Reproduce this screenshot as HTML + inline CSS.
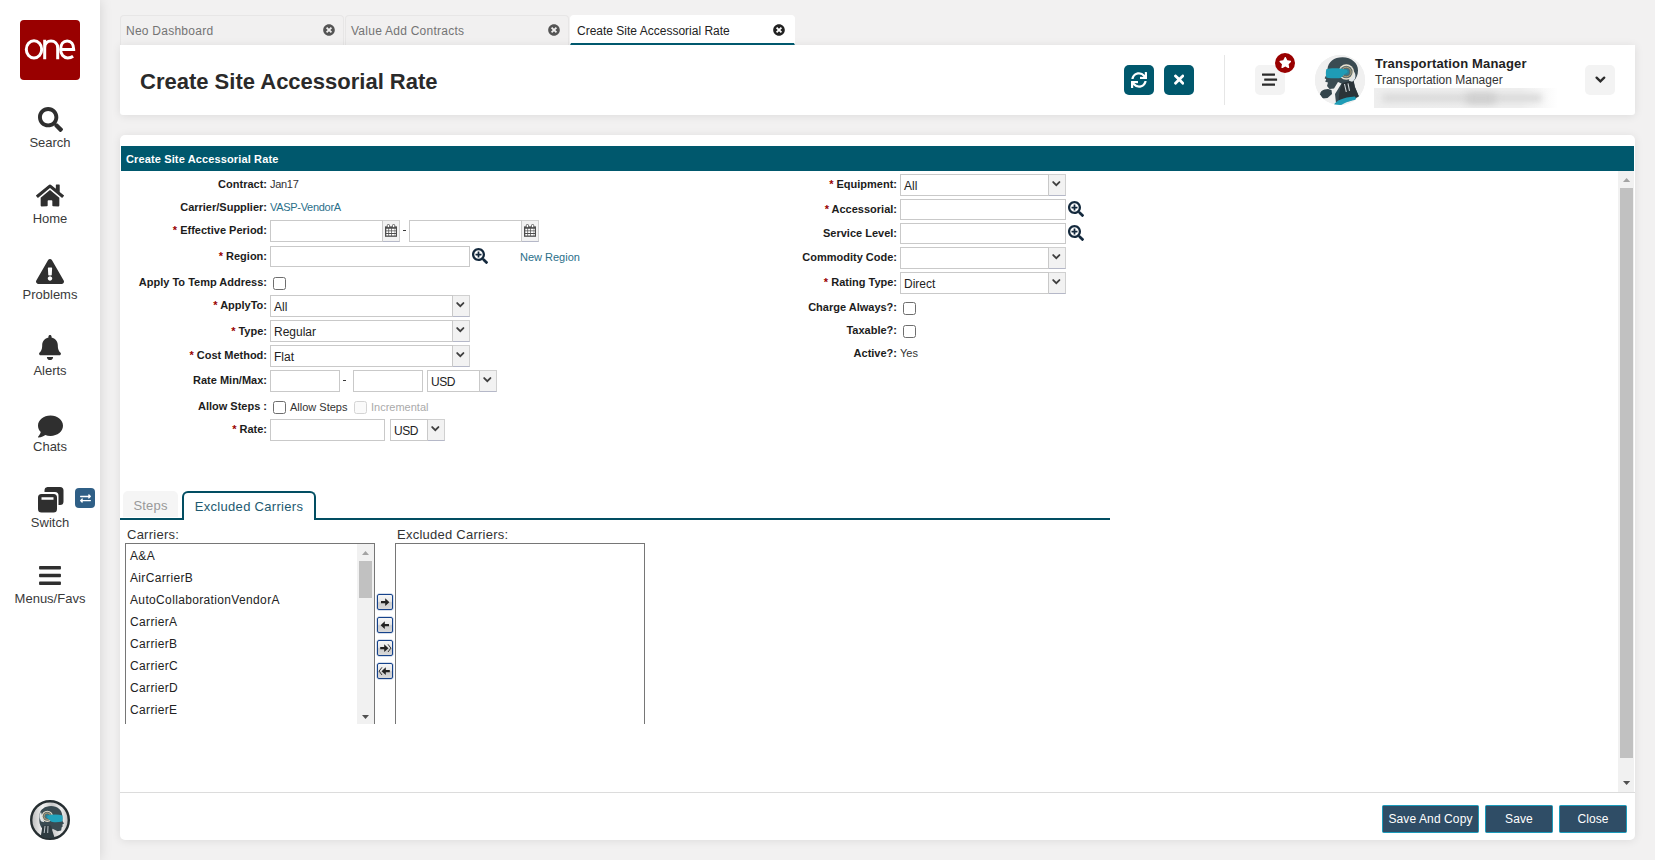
<!DOCTYPE html>
<html><head><meta charset="utf-8">
<style>
*{box-sizing:border-box;margin:0;padding:0}
html,body{width:1655px;height:860px;overflow:hidden}
body{background:#f2f1f1;font-family:"Liberation Sans",sans-serif;color:#222;position:relative}
.abs{position:absolute}
#side{position:absolute;left:0;top:0;width:100px;height:860px;background:#fff;box-shadow:0 0 12px rgba(0,0,0,.13)}
.logo{position:absolute;left:20px;top:20px;width:60px;height:60px;background:#990000;border-radius:4px}
.nav{position:absolute;left:0;width:100px;text-align:center;font-size:13px;color:#3a3a3a;line-height:14px}
.nav svg{position:absolute}
.nav span{position:absolute;left:0;width:100px;text-align:center}
/* tabs */
.tab{position:absolute;top:15px;height:30px;width:224px;background:#f1f0f0;border:1px solid #e7e6e6;border-bottom:none;border-radius:4px 4px 0 0;font-size:12px;color:#747474;line-height:30px;padding-left:5px;letter-spacing:.25px}
.tab.act{background:#fff;border-color:#fff;color:#222;letter-spacing:0;padding-left:6px;border-bottom:2px solid #00586d;line-height:30px}
.tab svg{position:absolute;right:8px;top:8px}
.tab.act svg{right:9px}
.tab.act{z-index:2}
#hdr{position:absolute;left:120px;top:45px;width:1515px;height:70px;background:#fff;box-shadow:0 1px 10px rgba(0,0,0,.09);border-radius:0 0 3px 3px}
#title{position:absolute;left:20px;top:23px;font-weight:bold;font-size:22px;color:#2a2a2a;white-space:nowrap;line-height:28px}
.tbtn{position:absolute;top:20px;width:30px;height:30px;border-radius:5px;background:#00586d}
.gbtn{position:absolute;top:20px;width:30px;height:30px;border-radius:5px;background:#f3f3f3}
#panel{position:absolute;left:120px;top:135px;width:1515px;height:705px;background:#fff;border-radius:5px;box-shadow:0 1px 10px rgba(0,0,0,.09)}
#bar{position:absolute;left:1px;top:11px;width:1513px;height:25px;background:#00586d;color:#fff;font-weight:bold;font-size:11px;line-height:26px;padding-left:5px;letter-spacing:.13px}

.lb{position:absolute;height:22px;line-height:22px;font-size:11px;font-weight:bold;color:#1c1c1c;text-align:right;white-space:nowrap}
.lb i{font-style:normal;color:#990000}
.lL{left:120px;width:147px}
.lR{left:700px;width:197px}
.val{position:absolute;height:22px;line-height:22px;font-size:11px;color:#333;white-space:nowrap}
.in{position:absolute;background:#fff;border:1px solid #c9c9c9;height:22px;font-size:12px;line-height:22px;color:#222;padding-left:3px;white-space:nowrap;overflow:hidden}
.tr{position:absolute;width:17px;height:22px;background:#f2f2f2;border:1px solid #d0d0d0;border-left:none;border-bottom-color:#b5b8c8}
.tr svg{position:absolute}
.cb{position:absolute;width:13px;height:13px;border:1px solid #6e6e6e;border-radius:2.500px;background:#fff}
.cb.dis{border-color:#d4d4d4;background:#fafafa}
.mag{position:absolute;width:16px;height:16px}

.li{position:absolute;left:130px;font-size:12px;line-height:22px;height:22px;color:#222;white-space:nowrap;letter-spacing:.35px}
.ab{position:absolute;left:377px;width:16px;height:16px;border:1px solid #15428b;border-radius:2px;background:linear-gradient(#f6f6f6 0%,#e8e8e8 45%,#cdcdcd 55%,#d9d9d9 100%);box-shadow:0 0 0 .5px rgba(21,66,139,.35)}
.ab svg{position:absolute;left:0;top:0}
.fb{position:absolute;top:805px;height:28px;background:#2f4d66;border:1px solid #1b9bbb;border-radius:1.500px;color:#fff;font-size:12px;line-height:27px;text-align:center;letter-spacing:.1px}
</style></head><body>
<div id="side">
  <div class="logo"><svg width="60" height="60" viewBox="0 0 60 60" style="position:absolute;left:0;top:0">
    <g fill="none" stroke="#fff" stroke-width="3">
      <ellipse cx="14" cy="29.400" rx="7.700" ry="8.600"/>
      <path d="M24.700 39.300V19.700M24.700 28c0-4.600 2.700-7 6.300-7s6.700 2.300 6.700 7v11.300"/>
      <path d="M41 29.500h12.700c0-5.500-2.700-8.600-6.500-8.600s-6.600 3.400-6.600 8.500 3.100 8.500 7.100 8.500c2.200 0 4-.6 5.400-1.600"/>
    </g></svg></div>
  <div class="nav" style="top:107px"><svg style="left:38px;top:0" width="25" height="25" viewBox="0 0 512 512"><path fill="#2f2f2f" d="M505 442.700L405.300 343c-4.500-4.500-10.600-7-17-7H372c27.600-35.300 44-79.700 44-128C416 93.100 322.900 0 208 0S0 93.100 0 208s93.100 208 208 208c48.300 0 92.700-16.400 128-44v16.300c0 6.400 2.500 12.500 7 17l99.700 99.700c9.400 9.400 24.600 9.400 33.900 0l28.300-28.300c9.400-9.400 9.400-24.600.1-34zM208 336c-70.700 0-128-57.200-128-128 0-70.700 57.200-128 128-128 70.700 0 128 57.200 128 128 0 70.700-57.200 128-128 128z"/></svg><span style="top:29px">Search</span></div>
  <div class="nav" style="top:183px"><svg style="left:36px;top:0" width="28" height="25" viewBox="0 0 576 512"><path fill="#2f2f2f" d="M280.370 148.260L96 300.110V464a16 16 0 0 0 16 16l112.060-.29a16 16 0 0 0 15.920-16V368a16 16 0 0 1 16-16h64a16 16 0 0 1 16 16v95.640a16 16 0 0 0 16 16.050L464 480a16 16 0 0 0 16-16V300L295.670 148.260a12.190 12.190 0 0 0-15.300 0zM571.600 251.470L488 182.560V44.050a12 12 0 0 0-12-12h-56a12 12 0 0 0-12 12v72.610L318.470 43a48 48 0 0 0-61 0L4.340 251.470a12 12 0 0 0-1.600 16.900l25.500 31A12 12 0 0 0 45.150 301l235.220-193.740a12.190 12.190 0 0 1 15.300 0L530.900 301a12 12 0 0 0 16.900-1.600l25.500-31a12 12 0 0 0-1.700-16.930z"/></svg><span style="top:29px">Home</span></div>
  <div class="nav" style="top:259px"><svg style="left:36px;top:0" width="28" height="25" viewBox="0 0 576 512"><path fill="#2f2f2f" d="M569.517 440.013C587.975 472.007 564.806 512 527.940 512H48.054c-36.937 0-59.999-40.055-41.577-71.987L246.423 23.985c18.467-32.009 64.720-31.951 83.154 0l239.940 416.028zM288 354c-25.405 0-46 20.595-46 46s20.595 46 46 46 46-20.595 46-46-20.595-46-46-46zm-43.673-165.346l7.418 136c.347 6.364 5.609 11.346 11.982 11.346h48.546c6.373 0 11.635-4.982 11.982-11.346l7.418-136c.375-6.874-5.098-12.654-11.982-12.654h-63.383c-6.884 0-12.356 5.780-11.981 12.654z"/></svg><span style="top:29px">Problems</span></div>
  <div class="nav" style="top:335px"><svg style="left:39px;top:0" width="22" height="25" viewBox="0 0 448 512"><path fill="#2f2f2f" d="M224 512c35.320 0 63.970-28.650 63.970-64H160.030c0 35.350 28.650 64 63.970 64zm215.390-149.710c-19.320-20.760-55.470-51.990-55.470-154.290 0-77.700-54.480-139.900-127.940-155.160V32c0-17.670-14.320-32-31.980-32s-31.980 14.330-31.980 32v20.840C118.560 68.100 64.080 130.300 64.080 208c0 102.300-36.150 133.530-55.470 154.290-6 6.450-8.660 14.160-8.610 21.710.11 16.400 12.980 32 32.100 32h383.800c19.120 0 32-15.600 32.100-32 .05-7.550-2.610-15.270-8.610-21.710z"/></svg><span style="top:29px">Alerts</span></div>
  <div class="nav" style="top:411px"><svg style="left:38px;top:3px" width="25" height="25" viewBox="0 0 512 512"><path fill="#2f2f2f" d="M256 32C114.600 32 0 125.100 0 240c0 49.600 21.400 95 57 130.700C44.500 421.100 2.700 466 2.200 466.500c-2.200 2.300-2.800 5.700-1.500 8.700S4.800 480 8 480c66.300 0 116-31.800 140.600-51.400 32.700 12.300 69 19.400 107.400 19.400 141.400 0 256-93.100 256-208S397.400 32 256 32z"/></svg><span style="top:29px">Chats</span></div>
  <div class="nav" style="top:487px"><svg style="left:38px;top:0" width="26" height="26" viewBox="0 0 26 26"><path fill="#2f2f2f" d="M9.500 0h12.500a3.500 3.500 0 0 1 3.500 3.500v11a3.500 3.500 0 0 1-3.500 3.500h-1.500v-9.500a3.500 3.500 0 0 0-3.500-3.500h-10.500v-1.500a3.500 3.500 0 0 1 3-3.500z"/><path fill="#2f2f2f" d="M3.500 7h12a3.500 3.500 0 0 1 3.500 3.500v11.500a3.500 3.500 0 0 1-3.500 3.500h-12a3.500 3.500 0 0 1-3.500-3.500v-11.500a3.500 3.500 0 0 1 3.500-3.500zm0 3.200v2.600h12v-2.600z" fill-rule="evenodd"/></svg><span style="top:29px">Switch</span></div>
  <div class="abs" style="left:75px;top:488px;width:20px;height:20px;border-radius:4px;background:#2f5f86"><svg style="position:absolute;left:4.500px;top:4.500px" width="11" height="11" viewBox="0 0 512 512"><path fill="#fff" d="M0 168v-16c0-13.255 10.745-24 24-24h360V80c0-21.367 25.899-32.042 40.971-16.971l80 80c9.372 9.373 9.372 24.569 0 33.941l-80 80C409.956 271.982 384 261.456 384 240v-48H24c-13.255 0-24-10.745-24-24zm488 152H128v-48c0-21.314-25.862-32.080-40.971-16.971l-80 80c-9.372 9.373-9.372 24.569 0 33.941l80 80C102.057 463.997 128 453.437 128 432v-48h360c13.255 0 24-10.745 24-24v-16c0-13.255-10.745-24-24-24z"/></svg></div>
  <div class="nav" style="top:563px"><svg style="left:39px;top:0" width="22" height="25" viewBox="0 0 448 512"><path fill="#2f2f2f" d="M16 132h416c8.837 0 16-7.163 16-16V76c0-8.837-7.163-16-16-16H16C7.163 60 0 67.163 0 76v40c0 8.837 7.163 16 16 16zm0 160h416c8.837 0 16-7.163 16-16v-40c0-8.837-7.163-16-16-16H16c-8.837 0-16 7.163-16 16v40c0 8.837 7.163 16 16 16zm0 160h416c8.837 0 16-7.163 16-16v-40c0-8.837-7.163-16-16-16H16c-8.837 0-16 7.163-16 16v40c0 8.837 7.163 16 16 16z"/></svg><span style="top:29px">Menus/Favs</span></div>
<div class="abs" style="left:30px;top:800px;width:40px;height:40px"><svg width="40" height="40" viewBox="0 0 40 40">
<defs><linearGradient id="mg" x1="0" y1="0" x2="1" y2="0"><stop offset="0" stop-color="#b9b9b9"/><stop offset=".3" stop-color="#f2f2f2"/><stop offset=".55" stop-color="#c9c9c9"/><stop offset=".8" stop-color="#eeeeee"/><stop offset="1" stop-color="#bdbdbd"/></linearGradient><clipPath id="cp"><circle cx="20" cy="20" r="18.500"/></clipPath></defs>
<circle cx="20" cy="20" r="18.800" fill="url(#mg)" stroke="#262e31" stroke-width="2.400"/>
<g clip-path="url(#cp)">
<path d="M9.600 14.500C10 9.500 15 6 21 6c6.500 0 11 4 11.200 9l.3 6 1.500 2.600-1.600.8.300 2-1 .8-.5 3.200-3.600.8-5-2.500-1.500 3.500 3.500 6H11l1.500-9.500c-1.800-2-3-4.500-3.200-8z" fill="#3a4b52"/>
<path d="M12.500 25.500h8.500l.8 3.500 3 9.500H10.500z" fill="#2f3b40"/>
<path d="M15 26l-.8 7M18 26l-.3 7" stroke="#cfd6d9" stroke-width=".9"/>
<path d="M11 12c-1.800 2-2 6 .3 9.500l3 .8z" fill="#dfe6e9"/>
<circle cx="17.300" cy="16.300" r="5.600" fill="#e4ddca"/>
<circle cx="17.300" cy="16.300" r="4.500" fill="#56666c"/>
<circle cx="17.300" cy="16.300" r="3.300" fill="none" stroke="#c9b27a" stroke-width=".7"/>
<circle cx="17.300" cy="16.300" r="2" fill="#2c8196"/>
<path d="M17.500 15.600c4.500-1.400 10.500-1.500 15-.2.400 2 .300 4.100-.3 6.100-3 .8-6.500 1-9.500.6-1.500-.3-2.700-1.400-3.700-2.600l-1.800-1.600z" fill="#22a3bd"/>
</g></svg></div>
</div>
<!-- TABS -->
<div class="tab" style="left:120px">Neo Dashboard<svg width="12" height="12" viewBox="0 0 512 512"><path fill="#555" d="M256 8C119 8 8 119 8 256s111 248 248 248 248-111 248-248S393 8 256 8zm121.600 313.100c4.700 4.700 4.700 12.300 0 17L338 377.600c-4.700 4.700-12.300 4.700-17 0L256 312l-65.100 65.600c-4.700 4.700-12.300 4.700-17 0L134.400 338c-4.700-4.700-4.700-12.300 0-17l65.600-65-65.600-65.100c-4.700-4.700-4.700-12.300 0-17l39.600-39.600c4.700-4.700 12.300-4.700 17 0l65 65.700 65.100-65.600c4.700-4.700 12.300-4.700 17 0l39.600 39.600c4.700 4.700 4.700 12.300 0 17L312 256l65.600 65.100z"/></svg></div>
<div class="tab" style="left:345px">Value Add Contracts<svg width="12" height="12" viewBox="0 0 512 512"><path fill="#555" d="M256 8C119 8 8 119 8 256s111 248 248 248 248-111 248-248S393 8 256 8zm121.600 313.100c4.700 4.700 4.700 12.300 0 17L338 377.600c-4.700 4.700-12.300 4.700-17 0L256 312l-65.100 65.600c-4.700 4.700-12.300 4.700-17 0L134.400 338c-4.700-4.700-4.700-12.300 0-17l65.600-65-65.600-65.100c-4.700-4.700-4.700-12.300 0-17l39.600-39.600c4.700-4.700 12.300-4.700 17 0l65 65.700 65.100-65.600c4.700-4.700 12.300-4.700 17 0l39.600 39.600c4.700 4.700 4.700 12.300 0 17L312 256l65.600 65.100z"/></svg></div>
<div class="tab act" style="left:570px;width:225px">Create Site Accessorial Rate<svg width="12" height="12" viewBox="0 0 512 512"><path fill="#222" d="M256 8C119 8 8 119 8 256s111 248 248 248 248-111 248-248S393 8 256 8zm121.600 313.100c4.700 4.700 4.700 12.300 0 17L338 377.600c-4.700 4.700-12.300 4.700-17 0L256 312l-65.100 65.600c-4.700 4.700-12.300 4.700-17 0L134.400 338c-4.700-4.700-4.700-12.300 0-17l65.600-65-65.600-65.100c-4.700-4.700-4.700-12.300 0-17l39.600-39.600c4.700-4.700 12.300-4.700 17 0l65 65.700 65.100-65.600c4.700-4.700 12.300-4.700 17 0l39.600 39.600c4.700 4.700 4.700 12.300 0 17L312 256l65.600 65.100z"/></svg></div>
<div id="hdr">
  <div id="title">Create Site Accessorial Rate</div>
  <div class="tbtn" style="left:1004px"><svg style="position:absolute;left:7px;top:7px" width="16" height="16" viewBox="0 0 512 512"><path fill="#fff" d="M440.650 12.570l4 82.770A247.160 247.160 0 0 0 255.830 8C134.730 8 33.910 94.920 12.290 209.820A12 12 0 0 0 24.090 224h49.050a12 12 0 0 0 11.670-9.260 175.910 175.910 0 0 1 317-56.940l-101.460-4.860a12 12 0 0 0-12.570 12v47.410a12 12 0 0 0 12 12H500a12 12 0 0 0 12-12V12a12 12 0 0 0-12-12h-47.370a12 12 0 0 0-11.980 12.570zM255.830 432a175.610 175.610 0 0 1-146-77.800l101.800 4.870a12 12 0 0 0 12.570-12v-47.400a12 12 0 0 0-12-12H12a12 12 0 0 0-12 12V500a12 12 0 0 0 12 12h47.350a12 12 0 0 0 12-12.600l-4.150-82.570A247.170 247.170 0 0 0 255.830 504c121.110 0 221.930-86.920 243.550-201.820a12 12 0 0 0-11.800-14.180h-49.050a12 12 0 0 0-11.670 9.260A175.860 175.860 0 0 1 255.830 432z"/></svg></div>
  <div class="tbtn" style="left:1044px"><svg style="position:absolute;left:9.800px;top:7.400px" width="10.400" height="15.200" viewBox="0 0 352 512"><path fill="#fff" d="M242.720 256l100.070-100.070c12.280-12.280 12.280-32.190 0-44.480l-22.240-22.240c-12.280-12.280-32.190-12.280-44.480 0L176 189.280 75.930 89.210c-12.280-12.280-32.190-12.280-44.480 0L9.210 111.450c-12.280 12.280-12.280 32.190 0 44.480L109.280 256 9.210 356.070c-12.280 12.280-12.280 32.190 0 44.480l22.240 22.240c12.280 12.280 32.200 12.280 44.480 0L176 322.720l100.070 100.070c12.280 12.280 32.200 12.280 44.480 0l22.240-22.240c12.280-12.280 12.280-32.190 0-44.480L242.720 256z"/></svg></div>
  <div class="abs" style="left:1104px;top:10px;width:1px;height:50px;background:#e6e6e6"></div>
  <div class="gbtn" style="left:1135px"><svg style="position:absolute;left:7px;top:7px" width="16" height="16" viewBox="0 0 16 16"><g fill="#2b2b2b"><rect x="0" y="1.400" width="13" height="2.300" rx=".4"/><rect x="2.200" y="6.400" width="12.900" height="2.400" rx=".4"/><rect x="0" y="11.400" width="13" height="2.400" rx=".4"/></g></svg></div>
  <div class="abs" style="left:1155px;top:8px;width:20px;height:20px;border-radius:10px;background:#990000"><svg style="position:absolute;left:3.700px;top:3.900px" width="12.600" height="11.200" viewBox="0 0 576 512"><path fill="#fff" d="M259.300 17.800L194 150.200 47.900 171.500c-26.200 3.800-36.700 36.100-17.700 54.600l105.700 103-25 145.500c-4.500 26.300 23.200 46 46.400 33.700L288 439.600l130.700 68.700c23.200 12.200 50.900-7.400 46.400-33.700l-25-145.500 105.700-103c19-18.500 8.500-50.800-17.700-54.600L382 150.200 316.700 17.800c-11.700-23.600-45.600-23.900-57.400 0z"/></svg></div>
  <div id="avatar" class="abs" style="left:1195px;top:10px;width:50px;height:50px;border-radius:25px;background:#ececec;overflow:hidden"><svg width="50" height="50" viewBox="0 0 50 50" style="position:absolute;left:0;top:0">
<rect width="50" height="50" fill="#f0f0f0"/>
<path d="M12.500 14C13 7 19 2.300 27.500 2.300c9 0 15.500 6 15.500 13.200 0 4.500-1.800 8-4.300 10.500l1.300 6 4 9.500-9 4.500-14 2-1-9 6.500-10.500-3.500-1.500-4 6.500-4.500.5-2.500-3 1-3.500-2.800-.8 1-2.400-1.600-1 1.500-3z" fill="#3a4b52"/>
<path d="M27 28.500c2-1 6-2.500 11.500-2.500l1.300 6 4 9.500-20 6.500c-.5-7 .8-14 3.200-19.500z" fill="#2a3338"/>
<path d="M29.500 29l1.800 8M33 28.300l1.500 7.500" stroke="#cfd6d9" stroke-width="1.100" fill="none"/>
<path d="M35.400 14.500c3 .5 5.200 3 5 7-.2 2.500-1.500 4.500-3.400 5.200l-3-1z" fill="#dfe6e9"/>
<circle cx="31.300" cy="17" r="7.800" fill="#e9e3d2"/>
<circle cx="31.300" cy="17" r="6.300" fill="#5a6a70"/>
<circle cx="31.300" cy="17" r="4.800" fill="none" stroke="#c9b27a" stroke-width=".8"/>
<circle cx="31.300" cy="17" r="3" fill="#2c8196"/>
<path d="M11.300 14.300c4-1.200 12-1.500 20.500.6l1 2-3.500 2.600c-2 2.500-3.500 3.600-5.300 3.700-4 .2-9 0-12.700-.8-.6-2.600-.6-5.500 0-8.100z" fill="#1f9cb6"/>
<path d="M5 39.500c0-2.500 2-4.500 4.500-5l3.500-.6 3.500 1.200.5 4-4.500 4-5 .5z" fill="#34454c"/>
<path d="M18.500 50c3-4.500 9-7.500 21.500-8.500l1.500 3c-8 1.500-13 3.500-15.500 6z" fill="#1f9cb6"/>
</svg></div>
  <div class="abs" style="left:1255px;top:11px;font-size:13px;font-weight:bold;color:#222;white-space:nowrap;line-height:16px;letter-spacing:.16px">Transportation Manager</div>
  <div class="abs" style="left:1255px;top:28px;font-size:12px;color:#333;white-space:nowrap;line-height:15px">Transportation Manager</div>
  <div class="abs" style="left:1254px;top:43px;width:184px;height:20px;overflow:hidden;background:linear-gradient(90deg,#eeeeee 0,#efefef 80%,#fff 100%)"><div class="abs" style="left:8px;top:6px;width:160px;height:8px;background:#d9d9d9;filter:blur(3px);border-radius:4px"></div><div class="abs" style="left:92px;top:5px;width:30px;height:11px;background:#cfcfcf;filter:blur(3.500px);border-radius:4px"></div></div>
  <div class="gbtn" style="left:1465px"><svg style="position:absolute;left:9.600px;top:11.300px" width="11" height="8" viewBox="0 0 11 8"><path d="M1.600 1.600L5.400 5.400 9.200 1.600" fill="none" stroke="#2b2b2b" stroke-width="2.300" stroke-linecap="round" stroke-linejoin="miter"/></svg></div>
</div>
<div id="panel">
  <div id="bar">Create Site Accessorial Rate</div>
</div>
<!-- FORM -->
<div id="form">
<div class="lb lL" style="top:173px">Contract:</div>
<div class="val" style="left:270px;top:173px;letter-spacing:-.3px">Jan17</div>
<div class="lb lL" style="top:196px">Carrier/Supplier:</div>
<div class="val" style="left:270px;top:196px;color:#2a6f8a;letter-spacing:-.3px">VASP-VendorA</div>
<div class="lb lL" style="top:219px"><i>* </i>Effective Period:</div>
<div class="in" style="left:270px;top:220px;width:113px"></div><div class="tr" style="left:383px;top:220px"><svg style="left:2px;top:2.700px" width="12" height="13.300" viewBox="0 0 12 14" preserveAspectRatio="none"><path fill="#4d4d4d" d="M0 2.500h12v11H0z"/><path fill="#fff" d="M1.300 5h2.100v1.800H1.300zm2.800 0h2.100v1.800H4.100zm2.800 0h2.100v1.800H6.900zm2.400 0h1.500v1.800H9.300zM1.300 7.700h2.100v1.800H1.300zm2.800 0h2.100v1.800H4.100zm2.800 0h2.100v1.800H6.900zm2.400 0h1.500v1.800H9.300zM1.300 10.400h2.100v1.800H1.300zm2.800 0h2.100v1.800H4.100zm2.800 0h2.100v1.800H6.900zm2.400 0h1.500v1.800H9.300z"/><rect x="2.300" y=".4" width="2.200" height="3.400" rx="1.100" fill="#fff" stroke="#444" stroke-width=".8"/><rect x="7.500" y=".4" width="2.200" height="3.400" rx="1.100" fill="#fff" stroke="#444" stroke-width=".8"/></svg></div>
<div class="abs" style="left:403px;top:230px;width:3px;height:1.300px;background:#3a3a3a"></div>
<div class="in" style="left:409px;top:220px;width:113px"></div><div class="tr" style="left:522px;top:220px"><svg style="left:2px;top:2.700px" width="12" height="13.300" viewBox="0 0 12 14" preserveAspectRatio="none"><path fill="#4d4d4d" d="M0 2.500h12v11H0z"/><path fill="#fff" d="M1.300 5h2.100v1.800H1.300zm2.800 0h2.100v1.800H4.100zm2.800 0h2.100v1.800H6.900zm2.400 0h1.500v1.800H9.300zM1.300 7.700h2.100v1.800H1.300zm2.800 0h2.100v1.800H4.100zm2.800 0h2.100v1.800H6.900zm2.400 0h1.500v1.800H9.300zM1.300 10.400h2.100v1.800H1.300zm2.800 0h2.100v1.800H4.100zm2.800 0h2.100v1.800H6.900zm2.400 0h1.500v1.800H9.300z"/><rect x="2.300" y=".4" width="2.200" height="3.400" rx="1.100" fill="#fff" stroke="#444" stroke-width=".8"/><rect x="7.500" y=".4" width="2.200" height="3.400" rx="1.100" fill="#fff" stroke="#444" stroke-width=".8"/></svg></div>
<div class="lb lL" style="top:245px"><i>* </i>Region:</div>
<div class="in" style="left:270px;top:246px;width:200px;height:21px"></div>
<div class="mag" style="left:472px;top:248px"><svg width="16" height="16" viewBox="0 0 512 512"><path fill="#14293d" d="M304 192v32c0 6.600-5.400 12-12 12h-56v56c0 6.600-5.400 12-12 12h-32c-6.600 0-12-5.400-12-12v-56h-56c-6.600 0-12-5.400-12-12v-32c0-6.600 5.400-12 12-12h56v-56c0-6.600 5.400-12 12-12h32c6.600 0 12 5.400 12 12v56h56c6.600 0 12 5.400 12 12zm201 284.700L476.700 505c-9.400 9.400-24.600 9.400-33.900 0L343 405.300c-4.500-4.500-7-10.600-7-17V372c-35.300 27.600-79.700 44-128 44C93.100 416 0 322.900 0 208S93.100 0 208 0s208 93.100 208 208c0 48.300-16.400 92.700-44 128h16.300c6.400 0 12.500 2.500 17 7l99.700 99.700c9.300 9.400 9.300 24.600 0 34zM344 208c0-75.200-60.800-136-136-136S72 132.800 72 208s60.800 136 136 136 136-60.800 136-136z"/></svg></div>
<div class="val" style="left:520px;top:246px;color:#2a6f8a">New Region</div>
<div class="lb lL" style="top:271px">Apply To Temp Address:</div>
<div class="cb" style="left:273px;top:277px"></div>
<div class="lb lL" style="top:294px"><i>* </i>ApplyTo:</div>
<div class="in" style="left:270px;top:295px;width:183px;height:22px">All</div><div class="tr" style="left:453px;top:295px;height:22px"><svg style="left:3px;top:6.400px" width="9" height="6" viewBox="0 0 9 6"><path d="M1.200 1.100l3.100 3.100L7.400 1.100" fill="none" stroke="#404040" stroke-width="1.850" stroke-linecap="round" stroke-linejoin="miter"/></svg></div>
<div class="lb lL" style="top:320px"><i>* </i>Type:</div>
<div class="in" style="left:270px;top:320px;width:183px;height:22px">Regular</div><div class="tr" style="left:453px;top:320px;height:22px"><svg style="left:3px;top:6.400px" width="9" height="6" viewBox="0 0 9 6"><path d="M1.200 1.100l3.100 3.100L7.400 1.100" fill="none" stroke="#404040" stroke-width="1.850" stroke-linecap="round" stroke-linejoin="miter"/></svg></div>
<div class="lb lL" style="top:344px"><i>* </i>Cost Method:</div>
<div class="in" style="left:270px;top:345px;width:183px;height:22px">Flat</div><div class="tr" style="left:453px;top:345px;height:22px"><svg style="left:3px;top:6.400px" width="9" height="6" viewBox="0 0 9 6"><path d="M1.200 1.100l3.100 3.100L7.400 1.100" fill="none" stroke="#404040" stroke-width="1.850" stroke-linecap="round" stroke-linejoin="miter"/></svg></div>
<div class="lb lL" style="top:369px">Rate Min/Max:</div>
<div class="in" style="left:270px;top:370px;width:70px;height:22px"></div>
<div class="abs" style="left:343px;top:380px;width:3px;height:1.300px;background:#3a3a3a"></div>
<div class="in" style="left:353px;top:370px;width:70px;height:22px"></div>
<div class="in" style="left:427px;top:370px;width:53px;height:22px;letter-spacing:-.4px">USD</div><div class="tr" style="left:480px;top:370px;height:22px"><svg style="left:3px;top:6.400px" width="9" height="6" viewBox="0 0 9 6"><path d="M1.200 1.100l3.100 3.100L7.400 1.100" fill="none" stroke="#404040" stroke-width="1.850" stroke-linecap="round" stroke-linejoin="miter"/></svg></div>
<div class="lb lL" style="top:395px">Allow Steps :</div>
<div class="cb" style="left:273px;top:401px"></div>
<div class="val" style="left:290px;top:396px">Allow Steps</div>
<div class="cb dis" style="left:354px;top:401px"></div>
<div class="val" style="left:371px;top:396px;color:#aaa">Incremental</div>
<div class="lb lL" style="top:418px"><i>* </i>Rate:</div>
<div class="in" style="left:270px;top:419px;width:115px;height:22px"></div>
<div class="in" style="left:390px;top:419px;width:38px;height:22px;letter-spacing:-.4px">USD</div><div class="tr" style="left:428px;top:419px;height:22px"><svg style="left:3px;top:6.400px" width="9" height="6" viewBox="0 0 9 6"><path d="M1.200 1.100l3.100 3.100L7.400 1.100" fill="none" stroke="#404040" stroke-width="1.850" stroke-linecap="round" stroke-linejoin="miter"/></svg></div>
<div class="lb lR" style="top:173px"><i>* </i>Equipment:</div>
<div class="in" style="left:900px;top:174px;width:149px;height:22px">All</div><div class="tr" style="left:1049px;top:174px;height:22px"><svg style="left:3px;top:6.400px" width="9" height="6" viewBox="0 0 9 6"><path d="M1.200 1.100l3.100 3.100L7.400 1.100" fill="none" stroke="#404040" stroke-width="1.850" stroke-linecap="round" stroke-linejoin="miter"/></svg></div>
<div class="lb lR" style="top:198px"><i>* </i>Accessorial:</div>
<div class="in" style="left:900px;top:199px;width:166px;height:21px"></div>
<div class="mag" style="left:1068px;top:201px"><svg width="16" height="16" viewBox="0 0 512 512"><path fill="#14293d" d="M304 192v32c0 6.600-5.400 12-12 12h-56v56c0 6.600-5.400 12-12 12h-32c-6.600 0-12-5.400-12-12v-56h-56c-6.600 0-12-5.400-12-12v-32c0-6.600 5.400-12 12-12h56v-56c0-6.600 5.400-12 12-12h32c6.600 0 12 5.400 12 12v56h56c6.600 0 12 5.400 12 12zm201 284.700L476.700 505c-9.400 9.400-24.600 9.400-33.900 0L343 405.300c-4.500-4.500-7-10.600-7-17V372c-35.300 27.600-79.700 44-128 44C93.100 416 0 322.900 0 208S93.100 0 208 0s208 93.100 208 208c0 48.300-16.400 92.700-44 128h16.300c6.400 0 12.500 2.500 17 7l99.700 99.700c9.300 9.400 9.300 24.600 0 34zM344 208c0-75.200-60.800-136-136-136S72 132.800 72 208s60.800 136 136 136 136-60.800 136-136z"/></svg></div>
<div class="lb lR" style="top:222px">Service Level:</div>
<div class="in" style="left:900px;top:223px;width:166px;height:21px"></div>
<div class="mag" style="left:1068px;top:225px"><svg width="16" height="16" viewBox="0 0 512 512"><path fill="#14293d" d="M304 192v32c0 6.600-5.400 12-12 12h-56v56c0 6.600-5.400 12-12 12h-32c-6.600 0-12-5.400-12-12v-56h-56c-6.600 0-12-5.400-12-12v-32c0-6.600 5.400-12 12-12h56v-56c0-6.600 5.400-12 12-12h32c6.600 0 12 5.400 12 12v56h56c6.600 0 12 5.400 12 12zm201 284.700L476.700 505c-9.400 9.400-24.600 9.400-33.900 0L343 405.300c-4.500-4.500-7-10.600-7-17V372c-35.300 27.600-79.700 44-128 44C93.100 416 0 322.900 0 208S93.100 0 208 0s208 93.100 208 208c0 48.300-16.400 92.700-44 128h16.300c6.400 0 12.500 2.500 17 7l99.700 99.700c9.300 9.400 9.300 24.600 0 34zM344 208c0-75.200-60.800-136-136-136S72 132.800 72 208s60.800 136 136 136 136-60.800 136-136z"/></svg></div>
<div class="lb lR" style="top:246px">Commodity Code:</div>
<div class="in" style="left:900px;top:247px;width:149px;height:22px"></div><div class="tr" style="left:1049px;top:247px;height:22px"><svg style="left:3px;top:6.400px" width="9" height="6" viewBox="0 0 9 6"><path d="M1.200 1.100l3.100 3.100L7.400 1.100" fill="none" stroke="#404040" stroke-width="1.850" stroke-linecap="round" stroke-linejoin="miter"/></svg></div>
<div class="lb lR" style="top:271px"><i>* </i>Rating Type:</div>
<div class="in" style="left:900px;top:272px;width:149px;height:22px">Direct</div><div class="tr" style="left:1049px;top:272px;height:22px"><svg style="left:3px;top:6.400px" width="9" height="6" viewBox="0 0 9 6"><path d="M1.200 1.100l3.100 3.100L7.400 1.100" fill="none" stroke="#404040" stroke-width="1.850" stroke-linecap="round" stroke-linejoin="miter"/></svg></div>
<div class="lb lR" style="top:296px">Charge Always?:</div>
<div class="cb" style="left:903px;top:302px"></div>
<div class="lb lR" style="top:319px">Taxable?:</div>
<div class="cb" style="left:903px;top:325px"></div>
<div class="lb lR" style="top:342px">Active?:</div>
<div class="val" style="left:900px;top:342px">Yes</div>
</div>
<!-- LOWER -->
<div id="lower">
<div class="abs" style="left:120px;top:518px;width:990px;height:2px;background:#024e62"></div>
<div class="abs" style="left:123px;top:491px;width:55px;height:26px;background:#f5f5f5;border-radius:5px 5px 0 0;font-size:13px;color:#999;line-height:30px;text-align:center;letter-spacing:.2px">Steps</div>
<div class="abs" style="left:182px;top:491px;width:134px;height:29px;background:#fff;border:2px solid #024e62;border-bottom:none;border-radius:6px 6px 0 0;font-size:13px;color:#1d5a70;line-height:28px;text-align:center;letter-spacing:.3px">Excluded Carriers</div>
<div class="abs" style="left:127px;top:527px;font-size:13px;color:#333;line-height:16px;letter-spacing:.25px">Carriers:</div>
<div class="abs" style="left:397px;top:527px;font-size:13px;color:#333;line-height:16px;letter-spacing:.25px">Excluded Carriers:</div>
<div class="abs" style="left:125px;top:543px;width:250px;height:181px;border:1px solid #767676;border-bottom:none;background:#fff"></div>
<div class="abs" style="left:395px;top:543px;width:250px;height:181px;border:1px solid #767676;border-bottom:none;background:#fff"></div>
<div class="li" style="top:545px">A&amp;A</div>
<div class="li" style="top:567px">AirCarrierB</div>
<div class="li" style="top:589px">AutoCollaborationVendorA</div>
<div class="li" style="top:611px">CarrierA</div>
<div class="li" style="top:633px">CarrierB</div>
<div class="li" style="top:655px">CarrierC</div>
<div class="li" style="top:677px">CarrierD</div>
<div class="li" style="top:699px">CarrierE</div>
<div class="abs" style="left:357px;top:544px;width:17px;height:180px;background:#f1f1f1"></div>
<div class="abs" style="left:359px;top:561px;width:13px;height:37px;background:#c1c1c1"></div>
<svg class="abs" style="left:361px;top:550px" width="9" height="6" viewBox="0 0 9 6"><path d="M1 5L4.500 1 8 5z" fill="#a3a3a3"/></svg>
<svg class="abs" style="left:361px;top:714px" width="9" height="6" viewBox="0 0 9 6"><path d="M1 1h7L4.500 5z" fill="#505050"/></svg>
<div class="ab" style="top:594px"><svg width="14" height="14" viewBox="0 0 14 14"><path d="M3 6.100h5v2.100H3zM7.200 3.200L11.400 7.150 7.200 11.100z" fill="#222"/></svg></div>
<div class="ab" style="top:617px"><svg width="14" height="14" viewBox="0 0 14 14"><path d="M11 6.100H6v2.100h5zM6.800 3.200L2.600 7.150 6.800 11.100z" fill="#222"/></svg></div>
<div class="ab" style="top:640px"><svg width="14" height="14" viewBox="0 0 14 14"><path d="M2.200 6.100h5v2.100h-5zM6.200 3.200L10.400 7.150 6.200 11.100z" fill="#222"/><path d="M10 3.300L12.900 7.150 10 11" fill="none" stroke="#222" stroke-width=".9"/></svg></div>
<div class="ab" style="top:663px"><svg width="14" height="14" viewBox="0 0 14 14"><path d="M11.800 6.100h-5v2.100h5zM7.800 3.200L3.600 7.150 7.800 11.100z" fill="#222"/><path d="M4 3.300L1.100 7.150 4 11" fill="none" stroke="#222" stroke-width=".9"/></svg></div>
<div class="abs" style="left:1618px;top:171px;width:16px;height:621px;background:#f1f1f1"></div>
<div class="abs" style="left:1620px;top:188px;width:13px;height:570px;background:#c1c1c1"></div>
<svg class="abs" style="left:1622px;top:177px" width="9" height="6" viewBox="0 0 9 6"><path d="M1 5L4.600 1 8.200 5z" fill="#a3a3a3"/></svg>
<svg class="abs" style="left:1622px;top:780px" width="9" height="6" viewBox="0 0 9 6"><path d="M1 1h7.200L4.600 5z" fill="#505050"/></svg>
<div class="abs" style="left:120px;top:792px;width:1515px;height:1px;background:#dcdcdc"></div>
<div class="fb" style="left:1382px;width:97px">Save And Copy</div>
<div class="fb" style="left:1485px;width:68px">Save</div>
<div class="fb" style="left:1559px;width:68px">Close</div>
</div>
</body></html>
